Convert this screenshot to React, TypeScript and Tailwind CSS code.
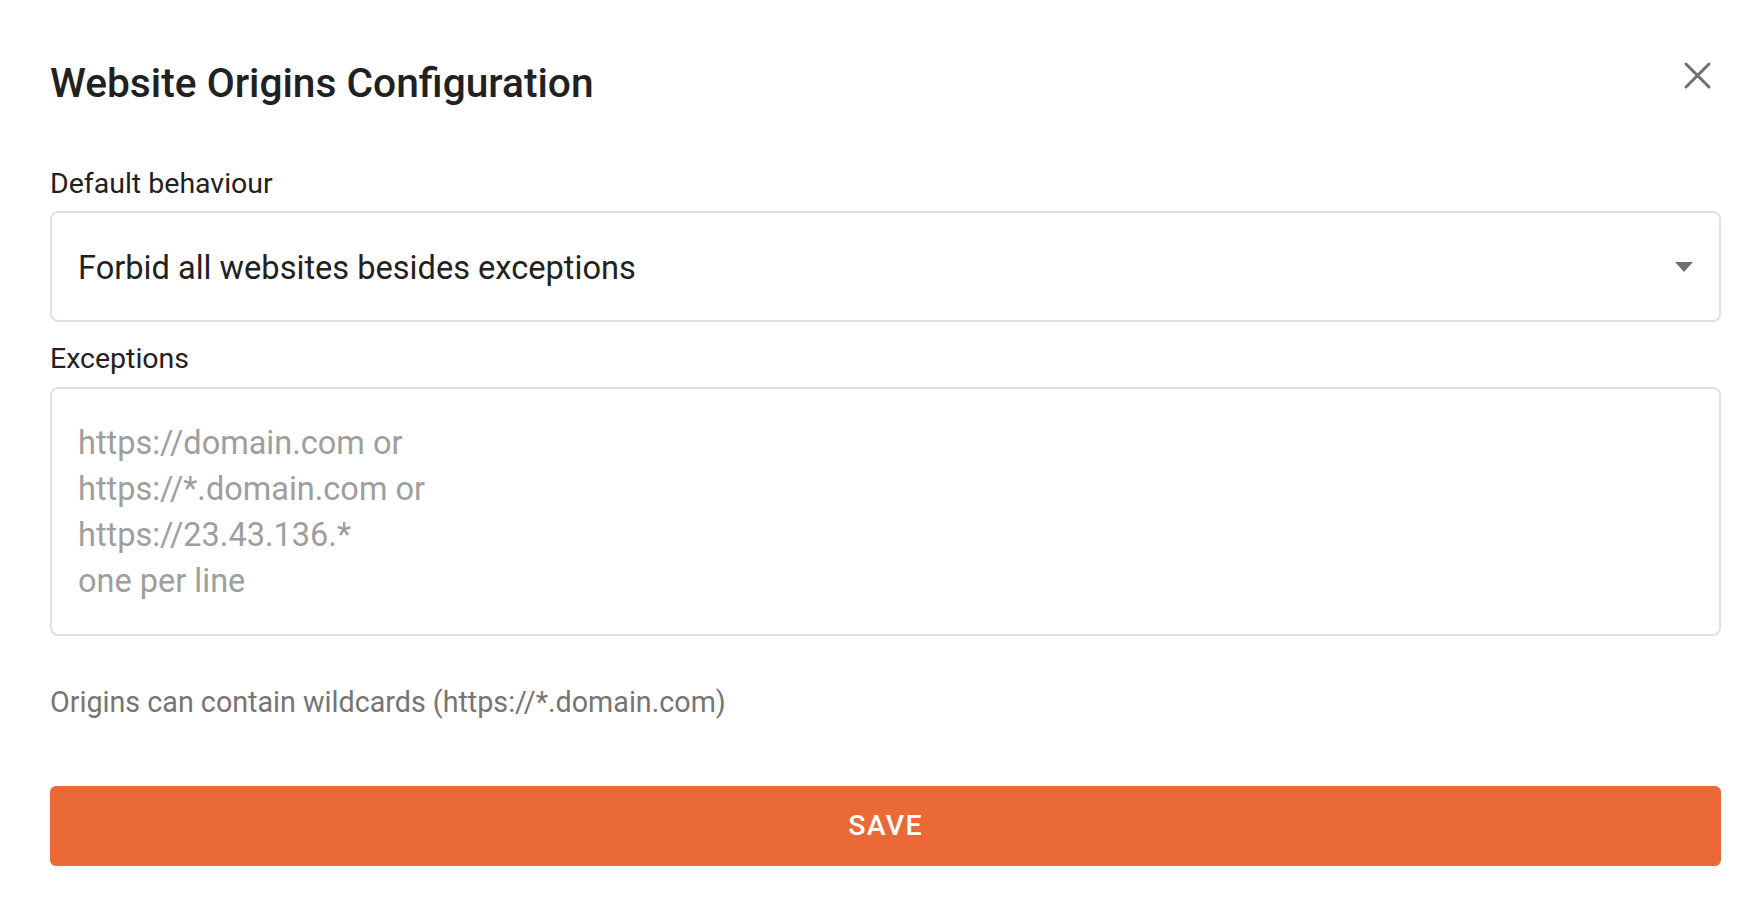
import React from "react";

const CloseIcon = () => (
  <svg width="29" height="29" viewBox="0 0 29 29" fill="none">
    <path
      d="M3 3 L26 26 M26 3 L3 26"
      stroke="#6f6f6f"
      strokeWidth="3"
      strokeLinecap="round"
    />
  </svg>
);

const App = () => {
  return (
    <div className="min-h-screen bg-white pl-[50px] pr-[33px] font-['Roboto',_sans-serif] text-[#212121]">
      {/* Header */}
      <div className="flex items-start justify-between pt-[63px]">
        <h2 className="text-[40.7px] leading-[40px] font-medium">
          Website Origins Configuration
        </h2>
        <button type="button" className="mt-[-2px] mr-[9px]">
          <CloseIcon />
        </button>
      </div>

      {/* Default behaviour */}
      <div className="mt-[67px] text-[28.5px] leading-[28px]">Default behaviour</div>
      <div className="mt-[13px] flex h-[111px] items-center justify-between rounded-[8px] border-2 border-[#e0e0e0] pl-[26px] pr-[26px]">
        <span className="pt-[3px] text-[32.6px]">Forbid all websites besides exceptions</span>
        <svg width="18" height="10" viewBox="0 0 18 10">
          <path d="M0 0 L18 0 L9 10 Z" fill="#707070" />
        </svg>
      </div>

      {/* Exceptions */}
      <div className="mt-[23px] text-[28.5px] leading-[28px]">Exceptions</div>
      <textarea
        className="mt-[14px] block h-[249px] w-full resize-none rounded-[8px] border-2 border-[#e0e0e0] px-[26px] pt-[31px] text-[32.5px] leading-[46px] outline-none placeholder:text-[#9e9e9e]"
        placeholder={
          "https://domain.com or\nhttps://*.domain.com or\nhttps://23.43.136.*\none per line"
        }
      />

      <p className="mt-[52px] text-[28.7px] leading-[28px] text-[#757575]">
        Origins can contain wildcards (https://*.domain.com)
      </p>

      <button
        type="button"
        className="mt-[70px] flex h-[80px] w-full items-center justify-center rounded-[6px] bg-[#eb6837] text-[28.5px] font-medium tracking-[0.045em] text-white"
      >
        SAVE
      </button>
    </div>
  );
};

export default App;
